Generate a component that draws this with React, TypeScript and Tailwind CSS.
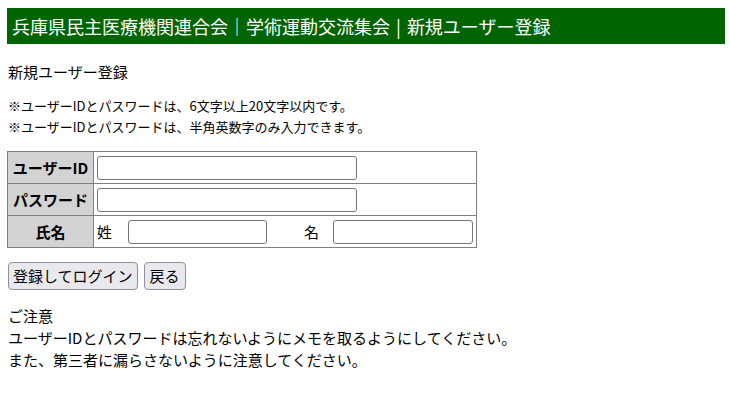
export default function App() {
  const font = { fontFamily: '"Noto Sans CJK JP", "Noto Sans", sans-serif' };
  return (
    <div className="min-h-[393px] bg-white text-black pl-[7px] pr-[5px] pt-[8px]" style={font}>
      <div className="h-[36px] bg-[#006400] text-white text-[18px] leading-[36px] pl-[5px] whitespace-nowrap">
        兵庫県民主医療機関連合会｜学術運動交流集会<span className="mx-[6px]">|</span>新規ユーザー登録
      </div>
      <div className="mt-[18px] pl-[1px] text-[15px] leading-[20px]">新規ユーザー登録</div>
      <div className="mt-[13px] pl-[1px] text-[13px] leading-[21px]">
        <div>※ユーザーIDとパスワードは、6文字以上20文字以内です。</div>
        <div>※ユーザーIDとパスワードは、半角英数字のみ入力できます。</div>
      </div>
      <table className="mt-[14px] w-[470px] border-collapse border border-[#808080] text-[15px]">
        <tbody>
          <tr className="h-[32px]">
            <th className="w-[86px] bg-[#d3d3d3] border border-[#808080] font-bold text-[15px] leading-[20px] px-[2px] text-center whitespace-nowrap">ユーザーID</th>
            <td className="border border-[#808080] pl-[3px]">
              <input className="block w-[260px] h-[24px] border border-[#767676] rounded-[3px] bg-white" />
            </td>
          </tr>
          <tr className="h-[32px]">
            <th className="bg-[#d3d3d3] border border-[#808080] font-bold text-[15px] leading-[20px] px-[2px] text-center whitespace-nowrap">パスワード</th>
            <td className="border border-[#808080] pl-[3px]">
              <input type="password" className="block w-[260px] h-[24px] border border-[#767676] rounded-[3px] bg-white" />
            </td>
          </tr>
          <tr className="h-[32px]">
            <th className="bg-[#d3d3d3] border border-[#808080] font-bold text-[15px] leading-[20px] px-[2px] text-center">氏名</th>
            <td className="border border-[#808080] pl-[3px]">
              <div className="flex items-center">
                <span className="text-[15px] leading-[20px]">姓</span>
                <input className="ml-[16px] block w-[139px] h-[24px] border border-[#767676] rounded-[3px] bg-white" />
                <span className="ml-[37px] text-[15px] leading-[20px]">名</span>
                <input className="ml-[14px] block w-[140px] h-[24px] border border-[#767676] rounded-[3px] bg-white" />
              </div>
            </td>
          </tr>
        </tbody>
      </table>
      <div className="mt-[14px] pl-[1px] flex gap-[6px]">
        <button className="h-[28px] px-[4px] text-[15px] leading-[20px] bg-[#e9e9ed] border border-[#8f8f9d] rounded-[4px] text-black">登録してログイン</button>
        <button className="h-[28px] px-[5px] text-[15px] leading-[20px] bg-[#e9e9ed] border border-[#8f8f9d] rounded-[4px] text-black">戻る</button>
      </div>
      <div className="mt-[15px] pl-[1px] text-[15px] leading-[22px]">
        <div>ご注意</div>
        <div>ユーザーIDとパスワードは忘れないようにメモを取るようにしてください。</div>
        <div>また、第三者に漏らさないように注意してください。</div>
      </div>
    </div>
  );
}
